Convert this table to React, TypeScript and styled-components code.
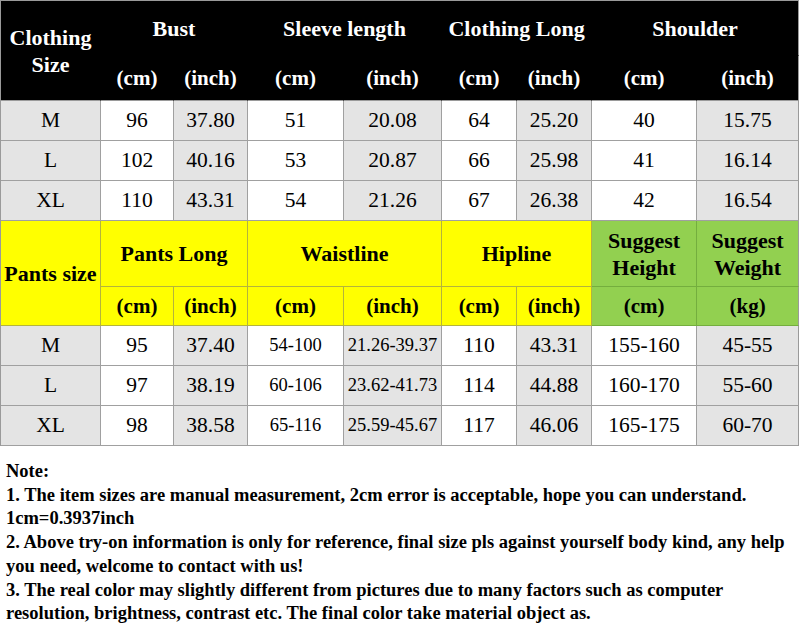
import React from "react";
import styled, { createGlobalStyle } from "styled-components";

const Global = createGlobalStyle`
  html, body { margin: 0; padding: 0; background: #ffffff; }
  body { font-family: "Liberation Serif", "Times New Roman", serif; color: #000; }
`;

const Page = styled.div`
  width: 800px;
  background: #fff;
`;

const Table = styled.table`
  table-layout: fixed;
  width: 798px;
  border-collapse: separate;
  border-spacing: 0;
  border-top: 1px solid #9a9a9a;
  border-left: 1px solid #9a9a9a;
  font-family: "Liberation Serif", "Times New Roman", serif;
`;

const Col = styled.col<{ $w: number }>`
  width: ${(p) => p.$w}px;
`;

type Tone = "black" | "gray" | "white" | "yellow" | "green";

const toneBg: Record<Tone, string> = {
  black: "#000000",
  gray: "#e4e4e4",
  white: "#ffffff",
  yellow: "#ffff00",
  green: "#92d050",
};
const toneBorder: Record<Tone, string> = {
  black: "#000000",
  gray: "#a0a0a0",
  white: "#a0a0a0",
  yellow: "#b4b43c",
  green: "#74ae3e",
};

const Row = styled.tr<{ $h: number }>`
  height: ${(p) => p.$h}px;
`;

const Cell = styled.td<{ $tone: Tone; $bold?: boolean; $size?: number; $edge?: string; $lh?: number }>`
  padding: 0;
  text-align: center;
  vertical-align: middle;
  background: ${(p) => toneBg[p.$tone]};
  color: ${(p) => (p.$tone === "black" ? "#ffffff" : "#000000")};
  font-weight: ${(p) => (p.$bold ? 700 : 400)};
  font-size: ${(p) => p.$size ?? 22}px;
  line-height: ${(p) => p.$lh ?? 27}px;
  border-right: 1px solid ${(p) => toneBorder[p.$tone]};
  border-bottom: 1px solid ${(p) => p.$edge ?? toneBorder[p.$tone]};
  white-space: nowrap;
  &:last-child {
    border-right-color: #9a9a9a;
  }
`;

const Notes = styled.div`
  margin-top: 14px;
  padding-left: 6px;
  font-family: "Liberation Serif", "Times New Roman", serif;
  font-weight: 700;
  font-size: 18.5px;
  line-height: 23.7px;
  white-space: nowrap;
`;

const NoteLine = styled.div``;

const widths = [100, 73, 74, 96, 98, 75, 75, 105, 102];

const clothing = [
  ["M", "96", "37.80", "51", "20.08", "64", "25.20", "40", "15.75"],
  ["L", "102", "40.16", "53", "20.87", "66", "25.98", "41", "16.14"],
  ["XL", "110", "43.31", "54", "21.26", "67", "26.38", "42", "16.54"],
];

const pants = [
  ["M", "95", "37.40", "54-100", "21.26-39.37", "110", "43.31", "155-160", "45-55"],
  ["L", "97", "38.19", "60-106", "23.62-41.73", "114", "44.88", "160-170", "55-60"],
  ["XL", "98", "38.58", "65-116", "25.59-45.67", "117", "46.06", "165-175", "60-70"],
];

const DataRows: React.FC<{ rows: string[][]; smallCols?: number[] }> = ({ rows, smallCols = [] }) => (
  <>
    {rows.map((r, i) => (
      <Row $h={40} key={i}>
        {r.map((v, j) => (
          <Cell
            key={j}
            $tone={j % 2 === 0 ? "gray" : "white"}
            $size={smallCols.includes(j) ? 18.5 : 21.5}
          >
            {v}
          </Cell>
        ))}
      </Row>
    ))}
  </>
);

export default function App() {
  return (
    <Page>
      <Global />
      <Table>
        <colgroup>
          {widths.map((w, i) => (
            <Col $w={w} key={i} />
          ))}
        </colgroup>
        <tbody>
          <Row $h={55}>
            <Cell $tone="black" $bold rowSpan={2} $edge="#9a9a9a">
              Clothing
              <br />
              Size
            </Cell>
            <Cell $tone="black" $bold colSpan={2}>Bust</Cell>
            <Cell $tone="black" $bold colSpan={2}>Sleeve length</Cell>
            <Cell $tone="black" $bold colSpan={2}>Clothing Long</Cell>
            <Cell $tone="black" $bold colSpan={2}>Shoulder</Cell>
          </Row>
          <Row $h={45}>
            {["(cm)", "(inch)", "(cm)", "(inch)", "(cm)", "(inch)", "(cm)", "(inch)"].map((u, i) => (
              <Cell key={i} $tone="black" $bold $size={21} $edge="#9a9a9a">
                {u}
              </Cell>
            ))}
          </Row>
          <DataRows rows={clothing} />
          <Row $h={66}>
            <Cell $tone="yellow" $bold rowSpan={2}>Pants size</Cell>
            <Cell $tone="yellow" $bold colSpan={2}>Pants Long</Cell>
            <Cell $tone="yellow" $bold colSpan={2}>Waistline</Cell>
            <Cell $tone="yellow" $bold colSpan={2}>Hipline</Cell>
            <Cell $tone="green" $bold>
              Suggest
              <br />
              Height
            </Cell>
            <Cell $tone="green" $bold>
              Suggest
              <br />
              Weight
            </Cell>
          </Row>
          <Row $h={39}>
            {["(cm)", "(inch)", "(cm)", "(inch)", "(cm)", "(inch)"].map((u, i) => (
              <Cell key={i} $tone="yellow" $bold $size={21}>
                {u}
              </Cell>
            ))}
            <Cell $tone="green" $bold $size={21}>(cm)</Cell>
            <Cell $tone="green" $bold $size={21}>(kg)</Cell>
          </Row>
          <DataRows rows={pants} smallCols={[3, 4]} />
        </tbody>
      </Table>
      <Notes>
        <NoteLine>Note:</NoteLine>
        <NoteLine>1. The item sizes are manual measurement, 2cm error is acceptable, hope you can understand.</NoteLine>
        <NoteLine>1cm=0.3937inch</NoteLine>
        <NoteLine>2. Above try-on information is only for reference, final size pls against yourself body kind, any help</NoteLine>
        <NoteLine>you need, welcome to contact with us!</NoteLine>
        <NoteLine>3. The real color may slightly different from pictures due to many factors such as computer</NoteLine>
        <NoteLine>resolution, brightness, contrast etc. The final color take material object as.</NoteLine>
      </Notes>
    </Page>
  );
}
